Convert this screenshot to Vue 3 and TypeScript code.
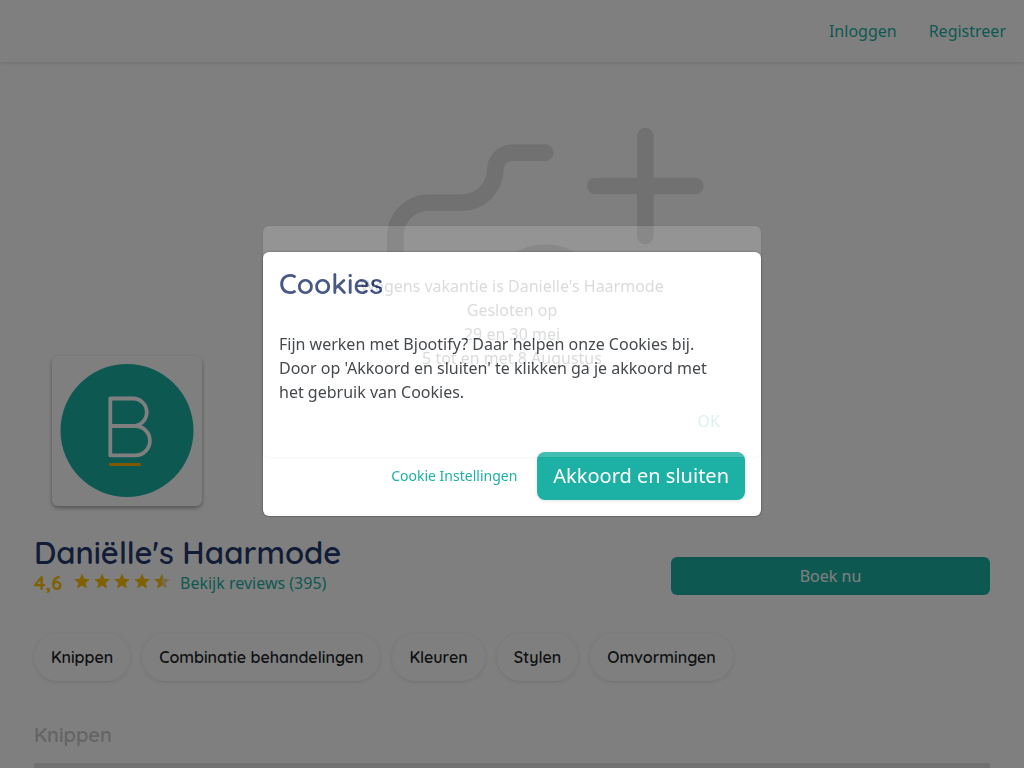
<script setup lang="ts">
import { ref } from 'vue'

const categories: string[] = ['Knippen', 'Combinatie behandelingen', 'Kleuren', 'Stylen', 'Omvormingen']
const notice: string[] = ["Wegens vakantie is Danielle's Haarmode", 'Gesloten op', '29 en 30 mei', '5 tot en met 8 Augustus']
const stars: number[] = [1, 1, 1, 1, 0.5]
const starPath = 'M12 17.27 18.18 21l-1.64-7.03L22 9.24l-7.19-.61L12 2 9.19 8.63 2 9.24l5.46 4.73L5.82 21z'
const cookiesOpen = ref(true)
const noticeOpen = ref(true)

function accept(): void {
  cookiesOpen.value = false
}
</script>

<template>
  <div class="page">
    <header class="bar">
      <nav class="nav">
        <a href="#inloggen">Inloggen</a>
        <a href="#registreer">Registreer</a>
      </nav>
    </header>

    <main>
      <section class="hero">
        <svg class="camera" viewBox="0 0 24 24" aria-hidden="true">
          <path d="M14 4h-2a1 1 0 0 0-1 1a2 2 0 0 1-2 2H7a2 2 0 0 0-2 2v9a2 2 0 0 0 2 2h14a2 2 0 0 0 2-2v-5M17 6h6M20 3v6" />
          <circle cx="14" cy="13" r="3" />
        </svg>
        <div class="avatar">
          <svg viewBox="0 0 150 150" role="img" aria-label="Bjootify">
            <circle cx="75" cy="74.5" r="66.5" fill="#1cb1a4" />
            <path d="M58.3 42.5H81a13.7 13.7 0 0 1 0 27.500H58.3zM81 70h2.200a14.700 14.700 0 0 1 0 29.400H58.300V70" fill="none" stroke="#fff" stroke-width="3.800" stroke-linejoin="round" />
            <path d="M58.500 108.500h29" stroke="#ffb000" stroke-width="3.200" stroke-linecap="round" />
          </svg>
        </div>
      </section>

      <section class="summary">
        <div>
          <h1>Daniëlle's Haarmode</h1>
          <div class="rating">
            <span class="score">4,6</span>
            <span class="stars" role="img" aria-label="4,6 van 5 sterren">
              <svg v-for="(value, i) in stars" :key="i" viewBox="2 2 20 19" aria-hidden="true">
                <defs>
                  <linearGradient :id="'fill' + i">
                    <stop :offset="value" stop-color="#ffc107" />
                    <stop :offset="value" :stop-color="value < 1 ? '#ead9a0' : '#ffc107'" />
                  </linearGradient>
                </defs>
                <path :d="starPath" :fill="`url(#fill${i})`" />
              </svg>
            </span>
            <a href="#reviews">Bekijk reviews (395)</a>
          </div>
        </div>
        <button type="button" class="book">Boek nu</button>
      </section>

      <div class="chips">
        <button v-for="name in categories" :key="name" type="button" class="chip">{{ name }}</button>
      </div>

      <section class="group">
        <h2>Knippen</h2>
        <div class="list"></div>
      </section>
    </main>
  </div>

  <div v-if="cookiesOpen || noticeOpen" class="scrim"></div>

  <div v-if="cookiesOpen" class="layer">
    <section class="dialog" role="dialog" aria-labelledby="cookies-title">
      <h2 id="cookies-title">Cookies</h2>
      <p>Fijn werken met Bjootify? Daar helpen onze Cookies bij. Door op 'Akkoord en sluiten' te klikken ga je akkoord met het gebruik van Cookies.</p>
      <div class="actions">
        <button type="button" class="plain">Cookie Instellingen</button>
        <button type="button" class="accept" @click="accept">Akkoord en sluiten</button>
      </div>
    </section>
  </div>

  <div v-if="noticeOpen" class="layer entering">
    <section class="dialog notice" role="dialog" aria-label="Mededeling">
      <p><span v-for="line in notice" :key="line">{{ line }}</span></p>
      <div class="confirm">
        <button type="button" @click="noticeOpen = false">OK</button>
      </div>
    </section>
  </div>
</template>

<style>
body {
  overflow: hidden;
}
</style>

<style scoped>
.page,
.layer {
  font-family: 'Noto Sans', 'Open Sans', sans-serif;
  font-size: 16px;
  line-height: 24px;
  color: #212529;
}

.page {
  height: 100vh;
  overflow: hidden;
  background: #fff;
}

button {
  border: 0;
  padding: 0;
  background: none;
  font: inherit;
  color: inherit;
  cursor: pointer;
}

a {
  color: #1cb1a4;
  text-decoration: none;
}

h1,
h2,
.chip,
.score {
  font-family: Quicksand, Lato, sans-serif;
}

.bar {
  height: 62px;
  box-shadow: 0 1px 4px rgba(0, 0, 0, 0.14);
}

.nav {
  display: flex;
  height: 100%;
  justify-content: flex-end;
  align-items: center;
  gap: 32px;
  padding: 0 18px;
}

.hero {
  position: relative;
  display: flex;
  justify-content: center;
  padding: 24px 0;
}

.camera {
  width: 400px;
  height: 400px;
  fill: none;
  stroke: #e3e3e3;
  stroke-width: 1;
  stroke-linecap: round;
  stroke-linejoin: round;
}

.avatar {
  position: absolute;
  left: 52px;
  bottom: 4px;
  width: 150px;
  height: 150px;
  border-radius: 6px;
  background: #fff;
  box-shadow: 0 2px 4px rgba(0, 0, 0, 0.35);
}

.avatar svg {
  display: block;
}

.summary {
  display: flex;
  justify-content: space-between;
  align-items: center;
  padding: 24px 34px 0;
}

h1 {
  margin: 0;
  font-size: 31px;
  line-height: 37px;
  font-weight: 600;
  color: #25386f;
}

.rating {
  display: flex;
  align-items: center;
  height: 24px;
}

.score {
  width: 40px;
  font-size: 20px;
  font-weight: 700;
  color: #ffc107;
}

.stars {
  display: flex;
  gap: 4px;
  width: 106px;
  padding-bottom: 4px;
}

.stars svg {
  width: 16px;
  height: 16px;
}

.book {
  width: 319px;
  height: 38px;
  margin-top: 22px;
  border-radius: 6px;
  background: #1cb1a4;
  color: #fff;
}

.chips {
  display: flex;
  gap: 12px;
  padding: 38px 34px 0;
}

.chip {
  height: 48px;
  padding: 0 17px;
  border-radius: 24px;
  font-weight: 600;
  box-shadow: 0 1px 4px rgba(0, 0, 0, 0.12);
}

.group {
  padding: 40px 34px 0;
}

.group h2 {
  margin: 0 0 14px;
  font-size: 20px;
  line-height: 28px;
  font-weight: 600;
  color: #c8c8c8;
}

.list {
  height: 100px;
  background: #e3e3e3;
}

.scrim {
  position: fixed;
  inset: 0;
  background: rgba(0, 0, 0, 0.5);
}

.layer {
  position: fixed;
  inset: 0;
  display: flex;
  align-items: center;
  justify-content: center;
}

.dialog {
  box-sizing: border-box;
  width: 498px;
  padding: 16px;
  border-radius: 6px;
  background: #fff;
  box-shadow: 0 0 2px rgba(0, 0, 0, 0.6);
}

.dialog h2 {
  margin: 0;
  font-size: 28px;
  line-height: 32px;
  font-weight: 600;
  color: #25386f;
}

.dialog p {
  margin: 32px 0 48px;
  padding-right: 16px;
}

.actions {
  display: flex;
  align-items: center;
  justify-content: flex-end;
  gap: 20px;
}

.plain {
  font-size: 14px;
  color: #1cb1a4;
}

.accept {
  height: 48px;
  padding: 0 16px;
  border-radius: 8px;
  background: #1cb1a4;
  color: #fff;
  font-size: 20px;
  box-shadow: 0 1px 4px rgba(0, 0, 0, 0.1);
}

.entering {
  opacity: 0.16;
  padding-bottom: 86px;
}

.dialog.notice {
  padding: 48px 41px 24px;
  text-align: center;
}

.notice p {
  margin: 0 0 39px;
  padding: 0;
}

.notice p span {
  display: block;
}

.confirm {
  text-align: right;
  color: #1cb1a4;
}
</style>
